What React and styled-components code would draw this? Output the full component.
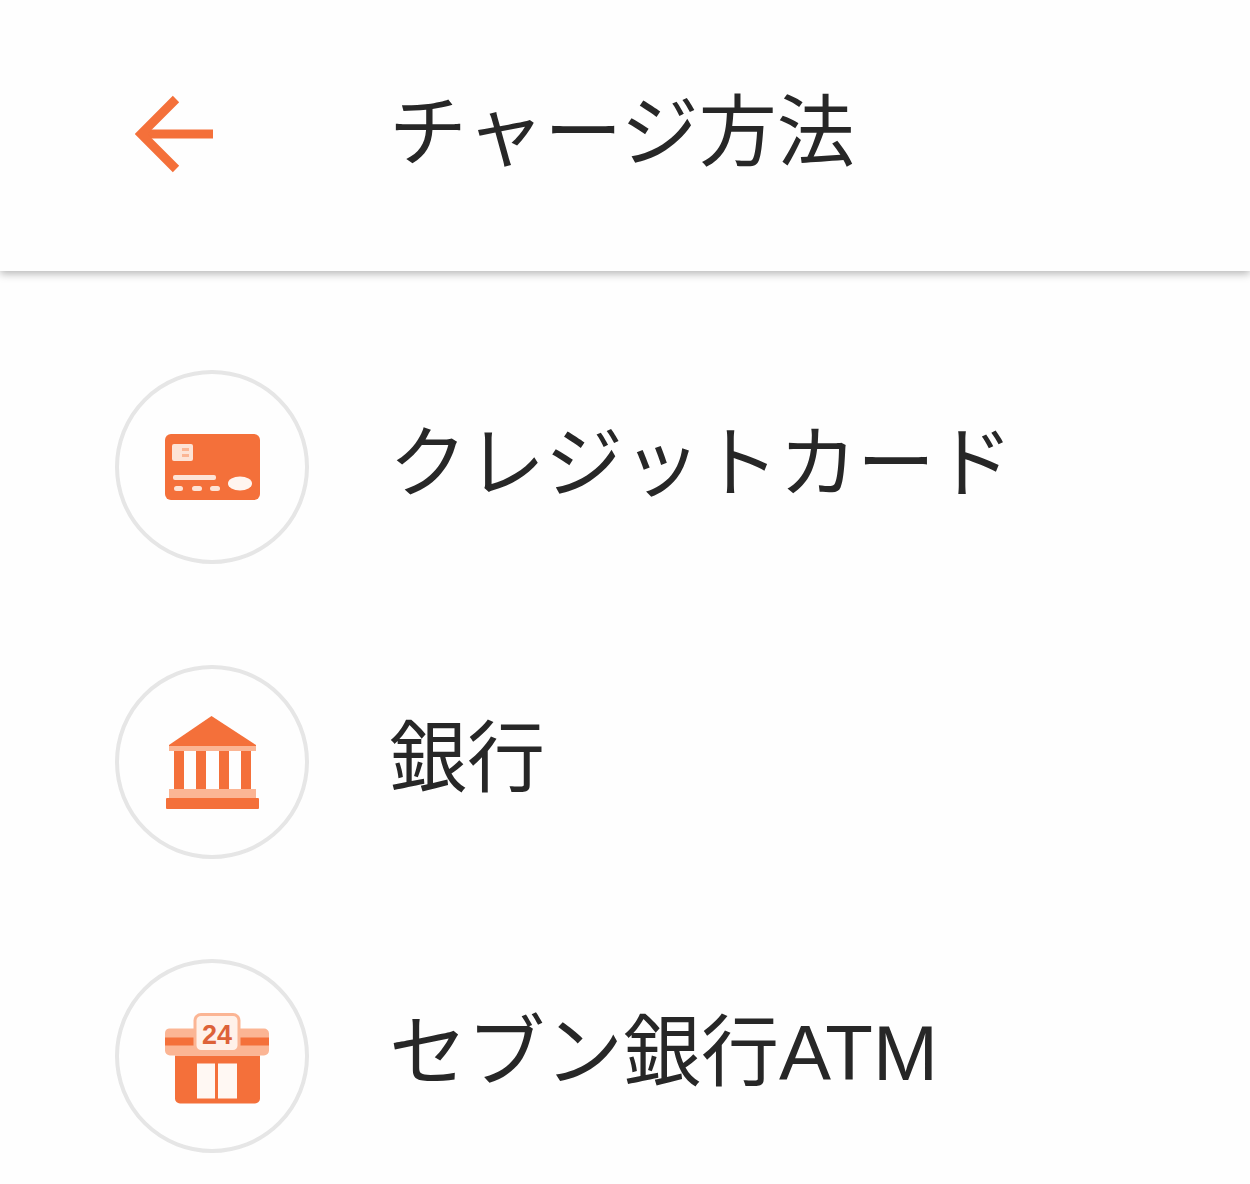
import React from 'react';
import styled, { createGlobalStyle } from 'styled-components';

const ORANGE = '#f4703a';
const PEACH = '#fbb594';

const GlobalStyle = createGlobalStyle`
  html, body {
    margin: 0;
    padding: 0;
    background: #fefefe;
  }
`;

const Page = styled.div`
  width: 1250px;
  height: 1184px;
  overflow: hidden;
  font-family: "Liberation Sans", "Noto Sans CJK JP", sans-serif;
  color: #272727;
`;

const Header = styled.header`
  display: flex;
  align-items: center;
  height: 271px;
  margin-bottom: 1px;
  box-sizing: border-box;
  padding-left: 135px;
  gap: 176px;
  box-shadow: 0 3px 8px rgba(0, 0, 0, 0.28);
`;

const BackButton = styled.button`
  display: flex;
  margin-bottom: 3px;
  padding: 0;
  border: 0;
  background: transparent;
`;

const Title = styled.h1`
  margin: 0 0 5px;
  font-size: 78px;
  line-height: 100px;
  font-weight: 400;
`;

const List = styled.ul`
  display: flex;
  flex-direction: column;
  gap: 100.5px;
  margin: 0;
  padding: 98px 0 0 115px;
  list-style: none;
`;

const Row = styled.li`
  display: flex;
  align-items: center;
  gap: 80px;
`;

const Circle = styled.div`
  display: flex;
  align-items: center;
  justify-content: center;
  width: 194px;
  height: 194px;
  box-sizing: border-box;
  border: 4px solid #e6e6e6;
  border-radius: 50%;
`;

const Label = styled.span`
  margin-bottom: 6px;
  font-size: 78px;
  line-height: 100px;
`;

const ArrowIcon = () => (
  <svg width="78" height="78" viewBox="135 95 78 78" fill="none" stroke={ORANGE} strokeWidth="9">
    <path d="M213 134H144" />
    <path d="M176 99L141 134L176 169" />
  </svg>
);

const CardIcon = () => (
  <svg width="120" height="120" viewBox="152 407 120 120">
    <rect x="165" y="434" width="95" height="66" rx="6" fill={ORANGE} />
    <rect x="172" y="444" width="21" height="17" rx="2" fill="#fde3d6" />
    <rect x="182" y="448" width="7" height="3" fill={PEACH} />
    <rect x="182" y="454" width="7" height="3" fill={PEACH} />
    <rect x="173" y="475" width="43" height="5" rx="2" fill="#fde3d6" />
    <rect x="174" y="486" width="9" height="5" rx="2.5" fill="#fde3d6" />
    <rect x="192" y="486" width="10" height="5" rx="2.5" fill="#fde3d6" />
    <rect x="210" y="486" width="10" height="5" rx="2.5" fill="#fde3d6" />
    <ellipse cx="240" cy="483.5" rx="12" ry="7" fill="#fff5ef" />
  </svg>
);

const BankIcon = () => (
  <svg width="120" height="120" viewBox="152 701 120 120">
    <path d="M211.5 715L256 744V750H169V744Z" fill={ORANGE} />
    <rect x="169" y="745" width="87" height="5" fill={PEACH} />
    <rect x="174" y="750" width="10" height="38" fill={ORANGE} />
    <rect x="196" y="750" width="10" height="38" fill={ORANGE} />
    <rect x="219" y="750" width="10" height="38" fill={ORANGE} />
    <rect x="241" y="750" width="10" height="38" fill={ORANGE} />
    <rect x="169" y="788" width="87" height="9" fill={PEACH} />
    <rect x="166" y="797" width="93" height="11" rx="1" fill={ORANGE} />
  </svg>
);

const StoreIcon = () => (
  <svg width="120" height="120" viewBox="152 995.5 120 120">
    <path d="M175 1055H260V1098a5 5 0 0 1-5 5H180a5 5 0 0 1-5-5Z" fill={ORANGE} />
    <rect x="197" y="1063" width="18" height="35" fill="#fff8f3" />
    <rect x="218" y="1063" width="19" height="35" fill="#fff8f3" />
    <path d="M169 1028H264a5 5 0 0 1 5 5V1050a5 5 0 0 1-5 5H170a5 5 0 0 1-5-5V1033a5 5 0 0 1 4-5Z" fill={PEACH} />
    <rect x="165" y="1037" width="104" height="8" fill={ORANGE} />
    <rect x="195" y="1014" width="44" height="37" rx="6" fill="#fff1e9" stroke={PEACH} strokeWidth="3" />
    <text x="217" y="1043" textAnchor="middle" fontFamily="Liberation Sans, sans-serif" fontWeight="700" fontSize="27" fill="#dd6238">24</text>
  </svg>
);

const METHODS = [
  { label: 'クレジットカード', icon: <CardIcon /> },
  { label: '銀行', icon: <BankIcon /> },
  { label: 'セブン銀行ATM', icon: <StoreIcon /> },
];

const App = () => (
  <>
    <GlobalStyle />
    <Page>
      <Header>
        <BackButton aria-label="戻る">
          <ArrowIcon />
        </BackButton>
        <Title>チャージ方法</Title>
      </Header>
      <List>
        {METHODS.map((m) => (
          <Row key={m.label}>
            <Circle>{m.icon}</Circle>
            <Label>{m.label}</Label>
          </Row>
        ))}
      </List>
    </Page>
  </>
);

export default App;
